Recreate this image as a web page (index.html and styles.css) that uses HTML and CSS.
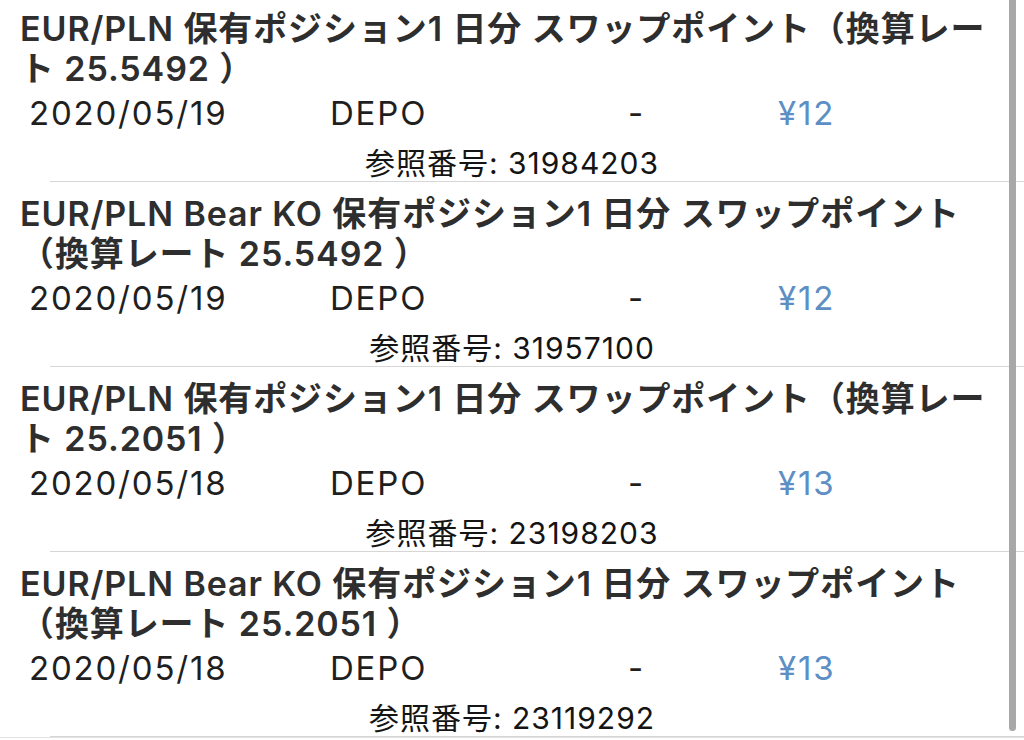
FILE: index.html
```html
<!DOCTYPE html>
<html lang="ja">
<head>
<meta charset="utf-8">
<title>スワップポイント履歴</title>
<link rel="stylesheet" href="styles.css">
</head>
<body>
<div class="page">
  <div class="list">
    <div class="item">
      <div class="title">EUR/PLN 保有ポジション1 日分 スワップポイント（換算レート 25.5492 ）</div>
      <div class="cols"><span>2020/05/19</span><span>DEPO</span><span class="dash">-</span><span class="amt">¥12</span></div>
      <div class="ref">参照番号: 31984203</div>
    </div>
    <div class="item">
      <div class="title">EUR/PLN Bear KO 保有ポジション1 日分 スワップポイント（換算レート 25.5492 ）</div>
      <div class="cols"><span>2020/05/19</span><span>DEPO</span><span class="dash">-</span><span class="amt">¥12</span></div>
      <div class="ref">参照番号: 31957100</div>
    </div>
    <div class="item">
      <div class="title">EUR/PLN 保有ポジション1 日分 スワップポイント（換算レート 25.2051 ）</div>
      <div class="cols"><span>2020/05/18</span><span>DEPO</span><span class="dash">-</span><span class="amt">¥13</span></div>
      <div class="ref">参照番号: 23198203</div>
    </div>
    <div class="item">
      <div class="title">EUR/PLN Bear KO 保有ポジション1 日分 スワップポイント（換算レート 25.2051 ）</div>
      <div class="cols"><span>2020/05/18</span><span>DEPO</span><span class="dash">-</span><span class="amt">¥13</span></div>
      <div class="ref">参照番号: 23119292</div>
    </div>
  </div>
  <div class="scrollbar"></div>
</div>
</body>
</html>
```
FILE: styles.css
```css
html, body {
  margin: 0;
  padding: 0;
  background: #ffffff;
}

body {
  font-family: Inter, "Noto Sans CJK JP", sans-serif;
  color: #222222;
  overflow: hidden;
}

.page {
  position: relative;
  width: 1024px;
  height: 740px;
  overflow: hidden;
}

.list {
  margin-top: -3px;
  border-bottom: 1px solid #e2e2e2;
}

.item {
  padding-top: 12px;
}

.item::after {
  content: "";
  display: block;
  height: 1px;
  margin-left: 50px;
  background: #d6d6d6;
}

.title {
  padding: 0 24px 0 20px;
  font-size: 34px;
  line-height: 40px;
  font-weight: 600;
  letter-spacing: 0.9px;
  color: #2e2e2e;
}

.cols {
  display: grid;
  grid-template-columns: 301px 298px 150px 1fr;
  margin-top: 4px;
  padding-left: 29px;
  font-size: 33px;
  line-height: 40px;
  letter-spacing: 1.8px;
  color: #1f1f1f;
}

.amt {
  color: #5d8fc5;
}

.ref {
  margin-top: 12px;
  font-size: 30px;
  line-height: 36px;
  letter-spacing: 1px;
  text-align: center;
  color: #141414;
}

.scrollbar {
  position: absolute;
  top: -10px;
  right: 8px;
  width: 7px;
  height: 741px;
  border-radius: 4px;
  background: #a8a8a8;
}
```
